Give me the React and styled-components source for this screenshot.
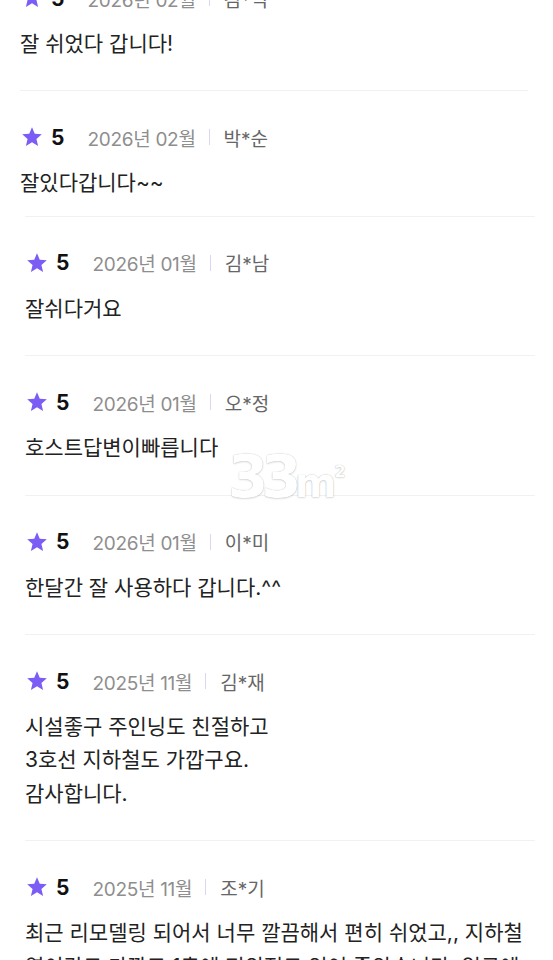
import styled, { createGlobalStyle } from "styled-components";

const GlobalStyle = createGlobalStyle`
  html, body {
    margin: 0;
    padding: 0;
    background: #fff;
    overflow: hidden;
  }
  body {
    font-family: Inter, "Noto Sans CJK KR", sans-serif;
    color: #222;
  }
`;

const Page = styled.div`
  position: relative;
  width: 553px;
  height: 960px;
  overflow: hidden;
`;

const List = styled.ul`
  list-style: none;
  margin: -48px 0 0;
  padding: 0;
`;

const Item = styled.li`
  margin: 0 ${(p) => (p.$wide ? "18px" : "25px")} 0 ${(p) => (p.$wide ? "25px" : "20px")};
  padding: 32px 0 ${(p) => (p.$tight ? "16px" : "30px")};
  border-bottom: ${(p) => (p.$line ? "1px solid #f1f1f1" : "none")};
  border-top: ${(p) => (p.$topLine ? "1px solid #f1f1f1" : "none")};
`;

const Header = styled.div`
  display: flex;
  align-items: center;
  height: 28px;
`;

const Star = styled.svg`
  width: 24px;
  height: 24px;
  flex: none;
`;

const Score = styled.span`
  margin-left: 7px;
  font-size: 21px;
  font-weight: 700;
  color: #111;
`;

const Date = styled.span`
  margin-left: 23px;
  font-size: 19px;
  color: #8e8e8e;
  letter-spacing: -0.3px;
`;

const Bar = styled.span`
  width: 1px;
  height: 16px;
  margin: 0 14px 0 13px;
  background: #ddd5f6;
`;

const Name = styled.span`
  font-size: 19px;
  color: #666;
`;

const Body = styled.p`
  margin: 15px 0 0;
  font-size: 21px;
  line-height: 33.4px;
  color: #222;
  white-space: pre-line;
`;

const Watermark = styled.div`
  position: absolute;
  left: 228px;
  top: 448px;
  font-family: "DejaVu Sans", sans-serif;
  font-size: 58px;
  font-weight: 700;
  letter-spacing: -7px;
  line-height: 1;
  color: #fff;
  text-shadow: 0 0 1px rgba(0, 0, 0, 0.3), 0 1px 2px rgba(0, 0, 0, 0.12);
  pointer-events: none;

  small {
    font-size: 40px;
    letter-spacing: -2px;
  }

  sup {
    font-size: 16px;
    letter-spacing: 0;
  }
`;

const reviews = [
  { date: "2026년 02월", name: "김*익", text: "잘 쉬었다 갑니다!" },
  { date: "2026년 02월", name: "박*순", text: "잘있다갑니다~~" },
  { date: "2026년 01월", name: "김*남", text: "잘쉬다거요" },
  { date: "2026년 01월", name: "오*정", text: "호스트답변이빠릅니다" },
  { date: "2026년 01월", name: "이*미", text: "한달간 잘 사용하다 갑니다.^^" },
  {
    date: "2025년 11월",
    name: "김*재",
    text: "시설좋구 주인닝도 친절하고\n3호선 지하철도 가깝구요.\n감사합니다.",
  },
  {
    date: "2025년 11월",
    name: "조*기",
    text: "최근 리모델링 되어서 너무 깔끔해서 편히 쉬었고,, 지하철역이랑도 가깝고 1층에 편의점도 있어 좋았습니다. 입구에",
  },
];

const StarIcon = () => (
  <Star viewBox="0 0 24 24">
    <path
      d="M12 2.2l2.75 6.6 7.05.55-5.37 4.6 1.66 6.95L12 17.15 5.91 20.9l1.66-6.95L2.2 9.35l7.05-.55z"
      fill="#7b5cf5"
    />
  </Star>
);

const App = () => (
  <Page>
    <GlobalStyle />
    <List>
      {reviews.map((r, i) => (
        <Item
          key={i}
          $wide={i >= 2}
          $line={i === 0}
          $topLine={i >= 2}
          $tight={i === 1}
        >
          <Header>
            <StarIcon />
            <Score>5</Score>
            <Date>{r.date}</Date>
            <Bar />
            <Name>{r.name}</Name>
          </Header>
          <Body>{r.text}</Body>
        </Item>
      ))}
    </List>
    <Watermark>
      33<small>m</small>
      <sup>2</sup>
    </Watermark>
  </Page>
);

export default App;
